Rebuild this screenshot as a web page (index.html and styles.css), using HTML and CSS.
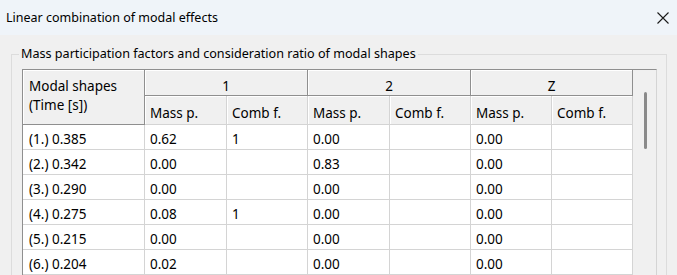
FILE: index.html
```html
<!DOCTYPE html>
<html lang="en">
<head>
  <meta charset="UTF-8" />
  <meta name="viewport" content="width=device-width, initial-scale=1.0"/>
  <title>Linear combination of modal effects</title>
  <link rel="stylesheet" href="styles.css">
</head>
<body>

<div class="titlebar">
  <span class="title">Linear combination of modal effects</span>
  <button class="close" title="Close">
    <svg width="12" height="12" viewBox="0 0 12 12">
      <path d="M0.5 0.5 L11.5 11.5 M11.5 0.5 L0.5 11.5" stroke="#1a1a1a" stroke-width="1.1" fill="none"/>
    </svg>
  </button>
</div>

<fieldset class="group">
  <legend>Mass participation factors and consideration ratio of modal shapes</legend>
  <div class="grid">
    <table class="modes">
      <colgroup>
        <col class="c-shape">
        <col class="c-wide"><col class="c-narrow">
        <col class="c-wide"><col class="c-narrow">
        <col class="c-narrow"><col class="c-narrow">
      </colgroup>
      <thead>
        <tr>
          <th rowspan="2" class="corner">Modal shapes<br>(Time [s])</th>
          <th colspan="2" class="dir">1</th>
          <th colspan="2" class="dir">2</th>
          <th colspan="2" class="dir">Z</th>
        </tr>
        <tr>
          <th class="sub">Mass p.</th><th class="sub">Comb f.</th>
          <th class="sub">Mass p.</th><th class="sub">Comb f.</th>
          <th class="sub">Mass p.</th><th class="sub">Comb f.</th>
        </tr>
      </thead>
      <tbody>
        <tr><td>(1.) 0.385</td><td>0.62</td><td>1</td><td>0.00</td><td></td><td>0.00</td><td></td></tr>
        <tr><td>(2.) 0.342</td><td>0.00</td><td></td><td>0.83</td><td></td><td>0.00</td><td></td></tr>
        <tr><td>(3.) 0.290</td><td>0.00</td><td></td><td>0.00</td><td></td><td>0.00</td><td></td></tr>
        <tr><td>(4.) 0.275</td><td>0.08</td><td>1</td><td>0.00</td><td></td><td>0.00</td><td></td></tr>
        <tr><td>(5.) 0.215</td><td>0.00</td><td></td><td>0.00</td><td></td><td>0.00</td><td></td></tr>
        <tr><td>(6.) 0.204</td><td>0.02</td><td></td><td>0.00</td><td></td><td>0.00</td><td></td></tr>
      </tbody>
    </table>
    <div class="scrollbar"><div class="thumb"></div></div>
  </div>
</fieldset>

</body>
</html>
```

FILE: styles.css
```css
html, body {
  overflow: hidden;
}
body {
  font-family: "Noto Sans", "Open Sans", sans-serif;
  font-size: 12.6px;
  color: #000;
  background: #f0f0f0;
  margin: 0;
  padding: 0;
}
.titlebar {
  height: 35px;
  background: #eff4f9;
  display: flex;
  align-items: center;
  justify-content: space-between;
}
.title {
  padding-left: 6px;
  font-size: 12.5px;
  line-height: 16px;
}
.close {
  width: 28px;
  height: 35px;
  border: 0;
  padding: 0;
  background: transparent;
  display: flex;
  align-items: center;
  justify-content: center;
}
.group {
  margin: 11px 10px 0 11px;
  padding: 7px 9px 0 10px;
  border: 1px solid #dcdcdc;
}
.group legend {
  margin-left: -3px;
  padding: 0 2px;
  line-height: 16px;
}
.grid {
  display: flex;
  border: 1px solid #8f8f8f;
  border-right-color: #d4d4d4;
  background: #f0f0f0;
}
.modes {
  width: 610px;
  table-layout: fixed;
  border-collapse: separate;
  border-spacing: 0;
  font-size: 13.5px;
}
.c-shape { width: 122px; }
.c-wide { width: 82px; }
.c-narrow { width: 81px; }
.modes th, .modes td {
  box-sizing: border-box;
  text-align: left;
  font-weight: normal;
  line-height: 16px;
  white-space: nowrap;
  overflow: hidden;
}
.modes th {
  background: #f0f0f0;
  box-shadow: inset 1px 1px 0 #fff;
}
.corner {
  vertical-align: top;
  line-height: 19px !important;
  padding: 7px 6px 0;
  border-right: 1px solid #8f8f8f;
  border-bottom: 1px solid #8f8f8f;
}
.dir {
  text-align: center !important;
  padding: 8px 0 1px;
  border-right: 1px solid #8f8f8f;
  border-bottom: 1px solid #8f8f8f;
}
.sub {
  padding: 9px 5px 3px 5px;
  border-right: 1px solid #d4d4d4;
  border-bottom: 1px solid #d4d4d4;
}
.modes td {
  background: #fff;
  padding: 6px 5px 2px 5px;
  border-right: 1px solid #d4d4d4;
  border-bottom: 1px solid #d4d4d4;
}
.modes td:first-child {
  padding-left: 6px;
}
.scrollbar {
  flex: 1;
  position: relative;
  background: #f0f0f0;
}
.thumb {
  position: absolute;
  left: 11px;
  top: 22px;
  width: 3px;
  height: 57px;
  border-radius: 2px;
  background: #8a8a8a;
}
```
